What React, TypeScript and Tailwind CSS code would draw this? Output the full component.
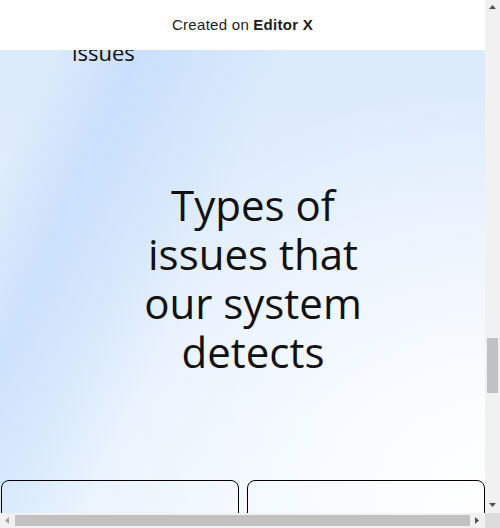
import React from 'react'

function ScrollArrow({ dir, dim }: { dir: 'up' | 'down' | 'left' | 'right'; dim?: boolean }) {
  const pts = {
    up: '1,6 4.5,2 8,6',
    down: '1,2 4.5,6 8,2',
    left: '6,1 2,4.5 6,8',
    right: '2,1 6,4.5 2,8',
  }[dir]
  return (
    <svg width="9" height="9" viewBox="0 0 9 9">
      <polygon points={pts} fill={dim ? '#a3a3a3' : '#505050'} />
    </svg>
  )
}

export default function App() {
  return (
    <div className="w-[500px] h-[528px] flex flex-col overflow-hidden bg-white">
      <div className="flex flex-1 min-h-0">
        {/* page */}
        <div className="flex-1 min-w-0 flex flex-col">
          <header className="h-[50px] shrink-0 bg-white flex items-center justify-center text-[15px] text-[#1b1b1b] font-['Liberation_Sans',sans-serif] tracking-[0.3px]">
            <span>Created on</span>
            <span className="font-bold ml-[4px]">Editor X</span>
          </header>

          <main className="flex-1 min-h-0 overflow-hidden bg-[linear-gradient(114deg,rgba(255,255,255,0)_8%,rgba(178,210,250,0.45)_20%,rgba(190,218,250,0.35)_30%,rgba(255,255,255,0)_42%),radial-gradient(ellipse_at_100%_95%,#ffffff_0%,rgba(255,255,255,0.6)_30%,rgba(255,255,255,0)_65%),linear-gradient(180deg,#dbeafc_0%,#e2eefd_60%,#e8f3fe_100%)]">
            <div className="-mt-[9px] pl-[72px] text-[22px] leading-[22px] text-[#111] font-['Open_Sans',sans-serif]">
              issues
            </div>

            <h2 className="mt-[117px] pl-[21px] text-center text-[42px] leading-[49px] text-[#111] font-['Open_Sans',sans-serif]">
              Types of
              <br />
              issues that
              <br />
              our system
              <br />
              detects
            </h2>

            <div className="mt-[104px] pl-[1px] flex gap-[8px]">
              <div className="w-[238px] h-[80px] border border-black rounded-[8px]" />
              <div className="w-[238px] h-[80px] border border-black rounded-[8px]" />
            </div>
          </main>
        </div>

        {/* vertical scrollbar */}
        <div className="w-[15px] shrink-0 bg-[#f1f1f1] flex flex-col items-center">
          <div className="h-[15px] flex items-center justify-center">
            <ScrollArrow dir="up" />
          </div>
          <div className="flex-1 w-full px-[2px] pt-[323px]">
            <div className="h-[55px] bg-[#c1c1c1]" />
          </div>
          <div className="h-[15px] flex items-center justify-center">
            <ScrollArrow dir="down" />
          </div>
        </div>
      </div>

      {/* horizontal scrollbar */}
      <div className="h-[15px] shrink-0 flex">
        <div className="flex-1 bg-[#f1f1f1] flex items-center">
          <div className="w-[15px] flex items-center justify-center">
            <ScrollArrow dir="left" dim />
          </div>
          <div className="w-[455px] h-[11px] bg-[#c1c1c1]" />
          <div className="flex-1 flex items-center justify-center">
            <ScrollArrow dir="right" />
          </div>
        </div>
        <div className="w-[15px] bg-[#dcdcdc]" />
      </div>
    </div>
  )
}
